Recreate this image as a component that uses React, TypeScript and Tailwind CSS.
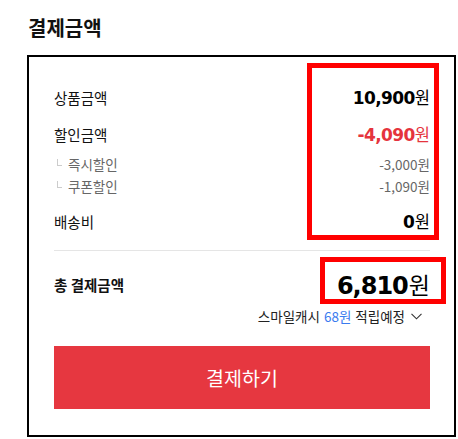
import React from "react";

const KR = { fontFamily: '"Noto Sans CJK KR", "Noto Sans", sans-serif' };
const NUM = { fontFamily: '"DejaVu Sans", "Noto Sans CJK KR", sans-serif' };

function SubMark() {
  return <span className="mr-[6px] mt-[-4px] inline-block h-[7px] w-[5px] border-b border-l border-[#cccccc]" />;
}

export default function App() {
  return (
    <div className="relative h-[439px] w-[458px] overflow-hidden bg-white text-[#111]" style={KR}>
      <div className="h-[55px] pl-[28px] pt-[16px]">
        <h2 className="text-[20px] font-bold leading-[24px] text-[#111]">결제금액</h2>
      </div>
      <div className="ml-[27px] w-[429px] border-2 border-black pl-[25px] pr-[24px] pt-[30px] pb-[26px]">
        <div className="flex h-[22px] items-center justify-between">
          <span className="text-[14.5px]">상품금액</span>
          <span className="flex items-baseline text-[17px] font-bold tracking-[-0.6px] text-black" style={NUM}>
            10,900<span className="text-[16.5px] font-normal tracking-normal" style={KR}>원</span>
          </span>
        </div>
        <div className="mt-[15px] flex h-[22px] items-center justify-between">
          <span className="text-[14.5px]">할인금액</span>
          <span className="flex items-baseline text-[17px] font-bold tracking-[-0.6px] text-[#e5343d]" style={NUM}>
            -4,090<span className="text-[16.5px] font-normal tracking-normal" style={KR}>원</span>
          </span>
        </div>
        <div className="mt-[8px] flex h-[20px] items-center justify-between text-[13.5px] text-[#666]">
          <span className="flex items-center pl-[3px]">
            <SubMark />
            즉시할인
          </span>
          <span>-3,000원</span>
        </div>
        <div className="mt-[2px] flex h-[20px] items-center justify-between text-[13.5px] text-[#666]">
          <span className="flex items-center pl-[3px]">
            <SubMark />
            쿠폰할인
          </span>
          <span>-1,090원</span>
        </div>
        <div className="mt-[15px] flex h-[22px] items-center justify-between">
          <span className="text-[14.5px]">배송비</span>
          <span className="flex items-baseline text-[17px] font-bold text-black" style={NUM}>
            0<span className="text-[16.5px] font-normal" style={KR}>원</span>
          </span>
        </div>
        <div className="mt-[17px] h-px bg-[#e5e5e5]" />
        <div className="mt-[19px] flex h-[30px] items-center justify-between">
          <span className="text-[14.5px] font-bold">총 결제금액</span>
          <span className="flex items-baseline text-[24px] font-bold tracking-[-1px] text-black" style={NUM}>
            6,810<span className="ml-[1px] text-[23px] font-normal tracking-normal" style={KR}>원</span>
          </span>
        </div>
        <div className="mt-[8px] flex h-[16px] items-center justify-end pr-[8px] text-[13.5px] text-[#222]">
          <span>스마일캐시</span>
          <span className="ml-[4px] text-[#3a7bef]">68원</span>
          <span className="ml-[4px]">적립예정</span>
          <svg className="ml-[6px]" width="11" height="7" viewBox="0 0 11 7" fill="none">
            <path d="M0.5 0.8 L5.5 5.8 L10.5 0.8" stroke="#333" strokeWidth="1.1" />
          </svg>
        </div>
        <button className="mt-[22px] flex h-[63px] w-full items-center justify-center bg-[#e63740] text-[19.5px] text-white">
          결제하기
        </button>
      </div>

      <div className="pointer-events-none absolute left-[307px] top-[63px] h-[177px] w-[132px] border-[5px] border-[#ff0000]" />
      <div className="pointer-events-none absolute left-[320px] top-[257px] h-[47px] w-[126px] border-[5px] border-[#ff0000]" />
    </div>
  );
}
